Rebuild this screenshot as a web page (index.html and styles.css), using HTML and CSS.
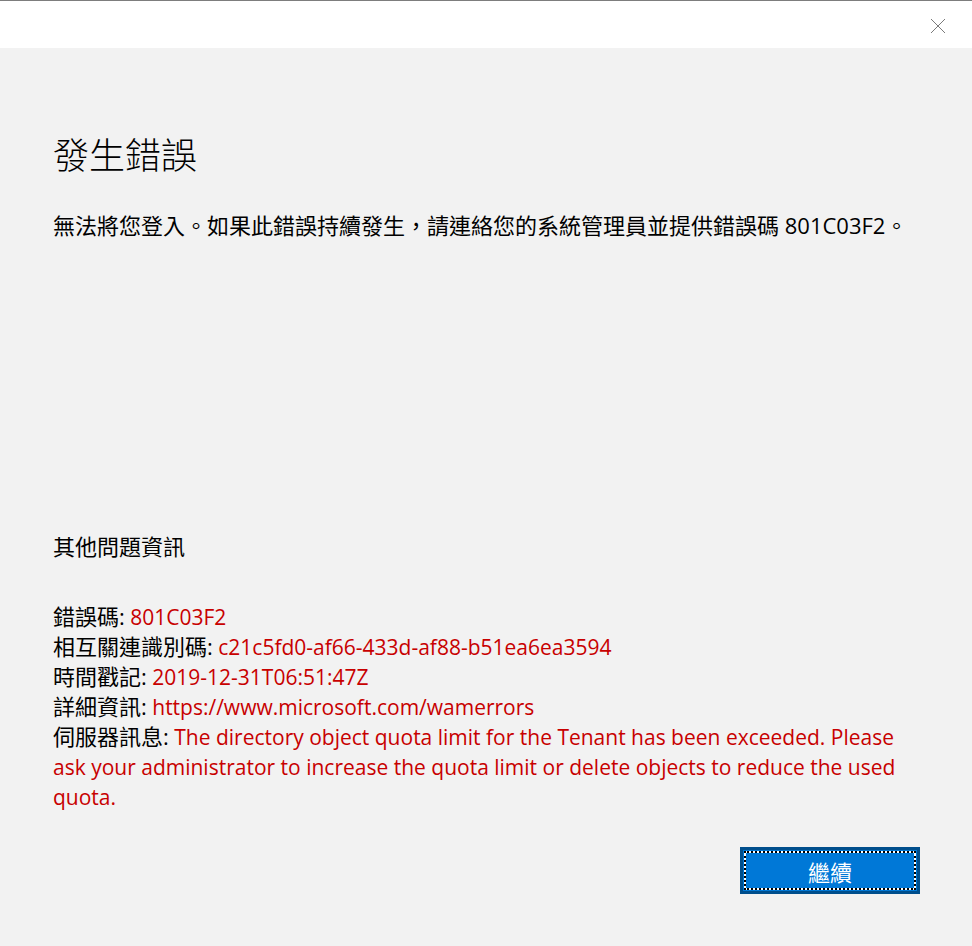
FILE: index.html
```html
<!DOCTYPE html>
<html lang="zh-Hant">
<head>
<meta charset="utf-8">
<title>發生錯誤</title>
<link rel="stylesheet" href="styles.css">
</head>
<body>
<div class="window">
  <header class="titlebar">
    <button class="close" aria-label="關閉">
      <svg width="16" height="16" viewBox="0 0 16 16"><path d="M1 1 L15 15 M15 1 L1 15" stroke="#7a7a7a" stroke-width="1" fill="none"/></svg>
    </button>
  </header>
  <main class="content">
    <h1 class="title">發生錯誤</h1>
    <p class="message">無法將您登入。如果此錯誤持續發生，請連絡您的系統管理員並提供錯誤碼 801C03F2。</p>
    <section class="details">
      <h2 class="details-heading">其他問題資訊</h2>
      <div class="info">
        <div class="row"><span class="label">錯誤碼:</span> <span class="val">801C03F2</span></div>
        <div class="row"><span class="label">相互關連識別碼:</span> <span class="val">c21c5fd0-af66-433d-af88-b51ea6ea3594</span></div>
        <div class="row"><span class="label">時間戳記:</span> <span class="val">2019-12-31T06:51:47Z</span></div>
        <div class="row"><span class="label">詳細資訊:</span> <span class="val">https://www.microsoft.com/wamerrors</span></div>
        <div class="row"><span class="label">伺服器訊息:</span> <span class="val">The directory object quota limit for the Tenant has been exceeded. Please ask your administrator to increase the quota limit or delete objects to reduce the used quota.</span></div>
      </div>
      <div class="actions">
        <button class="primary"><span class="focus">繼續</span></button>
      </div>
    </section>
  </main>
</div>
</body>
</html>
```
FILE: styles.css
```css
* { box-sizing: border-box; }
html, body { margin: 0; padding: 0; height: 100%; }
body {
  font-family: "Open Sans", "Noto Sans CJK TC", sans-serif;
  color: #000;
  background: #f2f2f2;
}
.window {
  height: 946px;
  display: flex;
  flex-direction: column;
}
.titlebar {
  height: 48px;
  background: #fff;
  border-top: 1px solid #7d7d7d;
  display: flex;
  justify-content: flex-end;
  align-items: center;
  padding-right: 26px;
}
.close {
  border: 0;
  background: transparent;
  padding: 0;
  width: 16px;
  height: 16px;
  display: flex;
  margin-top: 2px;
}
.content {
  flex: 1;
  background: #f2f2f2;
  padding: 81px 52px 52px 53px;
  display: flex;
  flex-direction: column;
}
.title {
  margin: 0;
  font-family: "Noto Sans CJK TC", sans-serif;
  font-weight: 300;
  font-size: 36px;
  line-height: 48px;
}
.message {
  margin: 33px 0 0;
  font-size: 22px;
  line-height: 30px;
}
.details {
  margin-top: auto;
  display: flex;
  flex-direction: column;
}
.details-heading {
  margin: 0;
  font-weight: 400;
  font-size: 22px;
  line-height: 30px;
}
.info {
  margin-top: 41px;
  font-size: 21px;
  line-height: 30px;
}
.row { height: auto; }
.label {
  font-size: 22px;
  line-height: 20px;
}
.val { color: #c80000; }
.actions {
  margin-top: 35px;
  display: flex;
  justify-content: flex-end;
}
.primary {
  width: 180px;
  height: 47px;
  padding: 1px;
  border: 3px solid #004e8c;
  background: #0078d7;
  font-family: "Noto Sans CJK TC", sans-serif;
  font-size: 22px;
  color: #fff;
}
.focus {
  display: flex;
  align-items: center;
  justify-content: center;
  height: 100%;
  border: 2px dotted #000;
  background: linear-gradient(#0078d7, #0078d7) padding-box, #fff border-box;
}
```
